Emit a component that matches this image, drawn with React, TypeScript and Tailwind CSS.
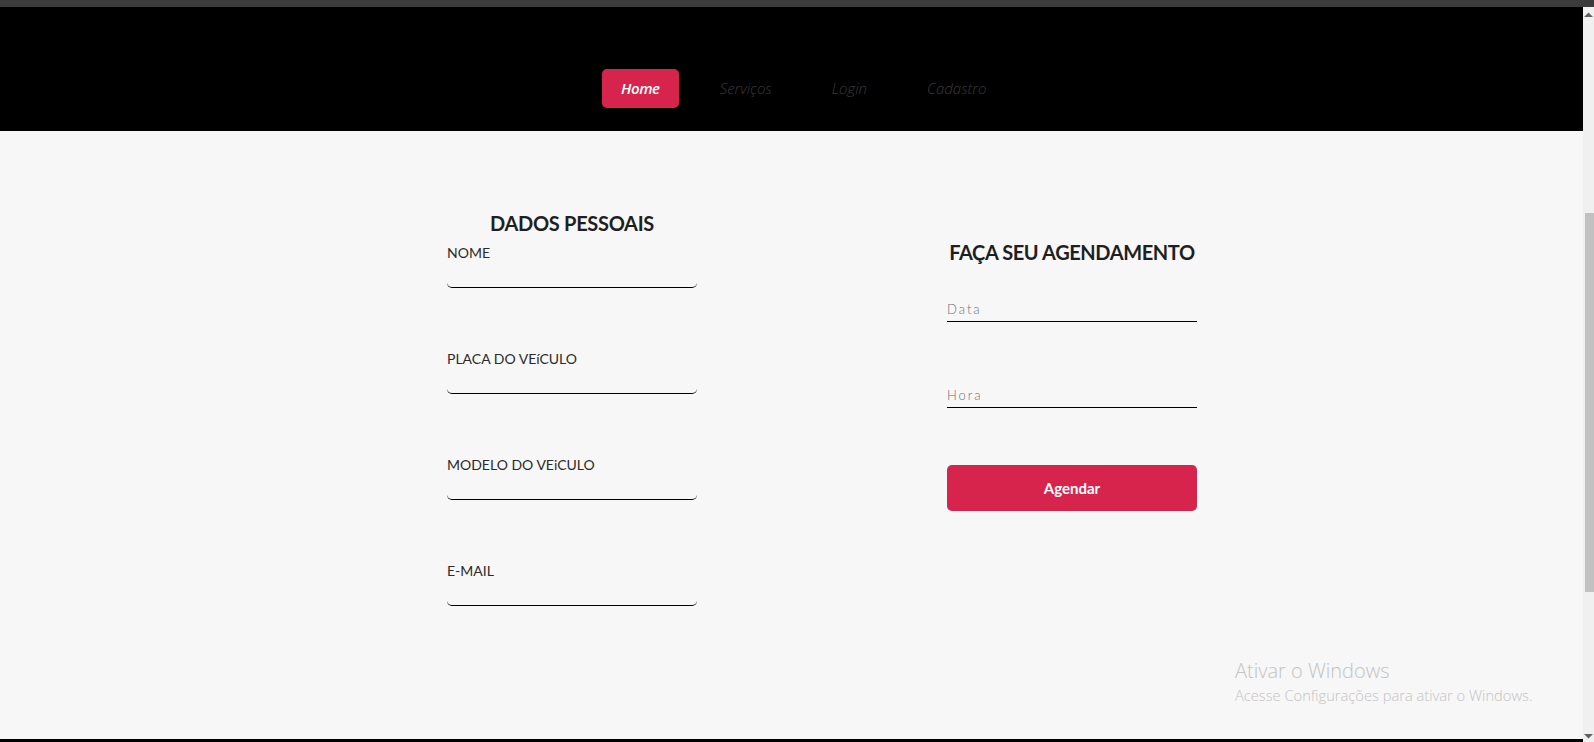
import React from "react";

const sans = { fontFamily: "Lato, 'Open Sans', sans-serif" };

function Field({ label }: { label: string }) {
  return (
    <div className="flex flex-col">
      <label className="text-[14px] leading-[18px] text-[#2b2b2b] whitespace-nowrap">{label}</label>
      <input
        type="text"
        className="h-[26px] w-[250px] bg-transparent outline-none border-0 border-b border-black rounded-b-[5px]"
      />
    </div>
  );
}

function Line({ placeholder }: { placeholder: string }) {
  return (
    <input
      type="text"
      placeholder={placeholder}
      className="h-[26px] w-[250px] bg-transparent outline-none border-0 border-b border-black p-0 text-[13px] font-light tracking-[2px] placeholder:text-[#6e6e78] text-[#333]"
    />
  );
}

export default function App() {
  return (
    <div className="w-[1594px] h-[742px] flex flex-col overflow-hidden bg-[#f7f7f7]" style={sans}>
      <div className="h-[7px] bg-[#3b3b3b] shrink-0" />
      <div className="flex flex-1 min-h-0">
        <div className="flex-1 flex flex-col relative">
          <header className="h-[124px] shrink-0 bg-black pt-[62px] pl-[602px]">
            <nav className="flex gap-[22px]" style={{ fontFamily: "'Open Sans', 'Noto Sans', sans-serif" }}>
              <a className="h-[39px] px-[19px] rounded-[5px] bg-[#d7244c] text-white italic font-semibold text-[15px] flex items-center tracking-[-0.4px]">
                Home
              </a>
              <a className="h-[39px] px-[19px] text-[#3a3a3a] italic font-light text-[15px] flex items-center">
                Serviços
              </a>
              <a className="h-[39px] px-[19px] text-[#3a3a3a] italic font-light text-[15px] flex items-center">
                Login
              </a>
              <a className="h-[39px] px-[19px] text-[#3a3a3a] italic font-light text-[15px] flex items-center">
                Cadastro
              </a>
            </nav>
          </header>

          <main className="flex-1 flex pl-[447px] gap-[250px]">
            <section className="w-[250px] pt-[80px] flex flex-col">
              <h2 className="text-center font-bold text-[20px] leading-[24px] tracking-[-0.3px] text-[#1f1f1f] mb-[9px] whitespace-nowrap">
                DADOS PESSOAIS
              </h2>
              <div className="flex flex-col gap-[62px]">
                <Field label="NOME" />
                <Field label="PLACA DO VEíCULO" />
                <Field label="MODELO DO VEiCULO" />
                <Field label="E-MAIL" />
              </div>
            </section>

            <section className="w-[250px] pt-[109px] flex flex-col">
              <h2 className="text-center font-bold text-[20px] leading-[24px] tracking-[-0.4px] text-[#1f1f1f] mb-[32px] whitespace-nowrap">
                FAÇA SEU AGENDAMENTO
              </h2>
              <div className="flex flex-col gap-[60px]">
                <Line placeholder="Data" />
                <Line placeholder="Hora" />
              </div>
              <button className="mt-[57px] h-[46px] w-[250px] rounded-[5px] bg-[#d7244c] text-white font-bold text-[15px]">
                Agendar
              </button>
            </section>
          </main>

          <div className="h-[3px] bg-black shrink-0" />

          <div
            className="absolute left-[1235px] top-[651px] text-[#c3c3c3] pointer-events-none"
            style={{ fontFamily: "'Open Sans', 'Noto Sans', sans-serif" }}
          >
            <div className="text-[20px] leading-[26px] font-light">Ativar o Windows</div>
            <div className="text-[14.7px] leading-[22px] font-light">Acesse Configurações para ativar o Windows.</div>
          </div>
        </div>

        <div className="w-[11px] shrink-0 bg-[#f0f0f0] flex flex-col items-center relative">
          <svg width="9" height="6" viewBox="0 0 9 6" className="mt-[5px]">
            <path d="M0 5 L4.5 0.5 L9 5 Z" fill="#606060" />
          </svg>
          <div className="mt-[195px] self-end w-[9px] h-[379px] bg-[#c1c1c1]" />
          <div className="flex-1" />
          <svg width="9" height="6" viewBox="0 0 9 6" className="mb-[3px]">
            <path d="M0 1 L4.5 5.5 L9 1 Z" fill="#606060" />
          </svg>
        </div>
      </div>
    </div>
  );
}
